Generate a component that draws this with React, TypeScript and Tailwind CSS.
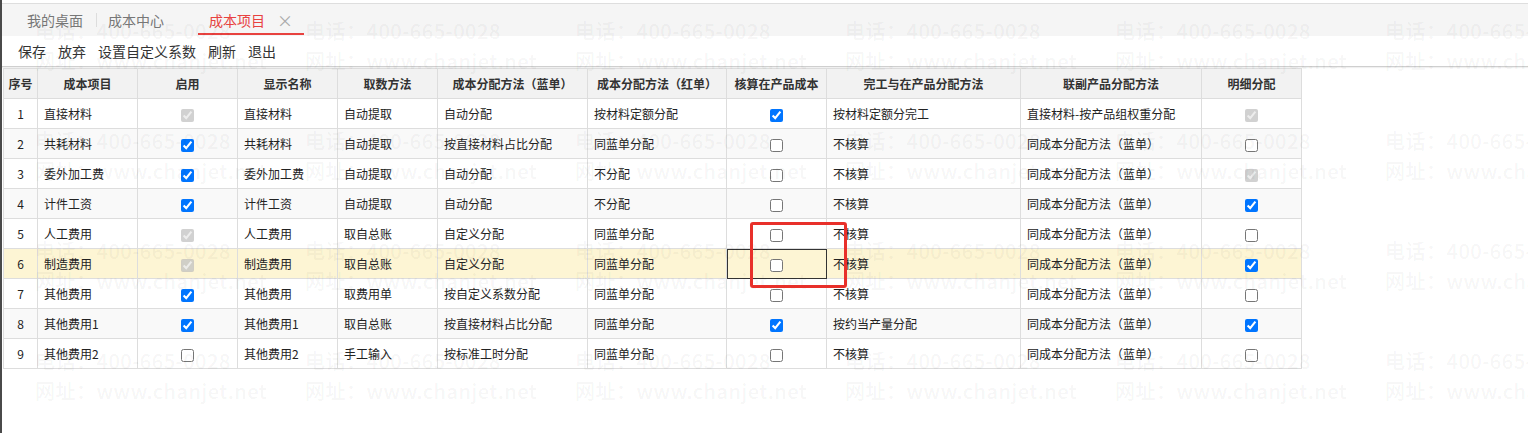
import React from 'react';

type Box = 'on' | 'off' | 'dis';

interface CostRow {
  no: number;
  item: string;
  enable: Box;
  name: string;
  fetch: string;
  blue: string;
  red: string;
  calc: Box;
  wip: string;
  joint: string;
  detail: Box;
}

const same = '同成本分配方法（蓝单）';

const rows: CostRow[] = [
  { no: 1, item: '直接材料', enable: 'dis', name: '直接材料', fetch: '自动提取', blue: '自动分配', red: '按材料定额分配', calc: 'on', wip: '按材料定额分完工', joint: '直接材料-按产品组权重分配', detail: 'dis' },
  { no: 2, item: '共耗材料', enable: 'on', name: '共耗材料', fetch: '自动提取', blue: '按直接材料占比分配', red: '同蓝单分配', calc: 'off', wip: '不核算', joint: same, detail: 'off' },
  { no: 3, item: '委外加工费', enable: 'on', name: '委外加工费', fetch: '自动提取', blue: '自动分配', red: '不分配', calc: 'off', wip: '不核算', joint: same, detail: 'dis' },
  { no: 4, item: '计件工资', enable: 'on', name: '计件工资', fetch: '自动提取', blue: '自动分配', red: '不分配', calc: 'off', wip: '不核算', joint: same, detail: 'on' },
  { no: 5, item: '人工费用', enable: 'dis', name: '人工费用', fetch: '取自总账', blue: '自定义分配', red: '同蓝单分配', calc: 'off', wip: '不核算', joint: same, detail: 'off' },
  { no: 6, item: '制造费用', enable: 'dis', name: '制造费用', fetch: '取自总账', blue: '自定义分配', red: '同蓝单分配', calc: 'off', wip: '不核算', joint: same, detail: 'on' },
  { no: 7, item: '其他费用', enable: 'on', name: '其他费用', fetch: '取费用单', blue: '按自定义系数分配', red: '同蓝单分配', calc: 'off', wip: '不核算', joint: same, detail: 'off' },
  { no: 8, item: '其他费用1', enable: 'on', name: '其他费用1', fetch: '取自总账', blue: '按直接材料占比分配', red: '同蓝单分配', calc: 'on', wip: '按约当产量分配', joint: same, detail: 'on' },
  { no: 9, item: '其他费用2', enable: 'off', name: '其他费用2', fetch: '手工输入', blue: '按标准工时分配', red: '同蓝单分配', calc: 'off', wip: '不核算', joint: same, detail: 'off' },
];

const headers = ['序号', '成本项目', '启用', '显示名称', '取数方法', '成本分配方法（蓝单）', '成本分配方法（红单）', '核算在产品成本', '完工与在产品分配方法', '联副产品分配方法', '明细分配'];

const Check = ({ state }: { state: Box }) => (
  <input
    type="checkbox"
    className="align-middle m-0"
    checked={state !== 'off'}
    disabled={state === 'dis'}
    readOnly
  />
);

const cell = 'border border-[#dddddd] px-[6px] whitespace-nowrap overflow-hidden';
const boxCell = 'border border-[#dddddd] text-center';

// repeated phone / site watermark laid over the whole page
const Watermark = () => {
  const tiles = Array.from({ length: 24 });
  return (
    <div className="pointer-events-none absolute inset-0 overflow-hidden">
      <div className="grid grid-cols-[repeat(6,270px)] auto-rows-[110px] pl-[33px] pt-[16px] text-[20px] leading-[30px] font-medium tracking-[0.5px] text-[rgba(0,0,0,0.05)]">
        {tiles.map((_, i) => (
          <div key={i} className="whitespace-nowrap">
            <div>电话：400-665-0028</div>
            <div>网址：www.chanjet.net</div>
          </div>
        ))}
      </div>
    </div>
  );
};

export default function App() {
  return (
    <div className="relative min-h-[433px] w-full overflow-hidden bg-white border-l-2 border-[#4a4a4a] font-['Noto_Sans_CJK_SC','Noto_Sans',sans-serif]">
      {/* tab bar */}
      <div className="mt-[3px] h-[33px] border-t border-[#dedede] bg-[#f5f5f5] flex items-stretch text-[14px] text-[#777]">
        <div className="pl-[25px] pr-[13px] flex items-center border-r border-[#dddddd] my-[9px]">我的桌面</div>
        <div className="pl-[11px] pr-[34px] flex items-center">成本中心</div>
        <div className="relative pl-[11px] pr-[11px] flex items-center gap-[12px] text-[#e8423f]">
          <span>成本项目</span>
          <span className="text-[#aaa] text-[16px] leading-none">×</span>
          <div className="absolute left-0 right-0 bottom-[1px] h-[2px] bg-[#e8423f]" />
        </div>
      </div>

      {/* toolbar */}
      <div className="h-[31px] border-b border-[#cfcfcf] shadow-[0_1px_1px_rgba(0,0,0,0.06)] flex items-center gap-3 pl-[16px] text-[14px] text-[#333]">
        <span>保存</span>
        <span>放弃</span>
        <span>设置自定义系数</span>
        <span>刷新</span>
        <span>退出</span>
      </div>

      {/* grid */}
      <div className="ml-px mt-px">
        <table className="table-fixed border-collapse w-[1299px] text-[12px] text-[#222]">
          <colgroup>
            <col className="w-[34px]" />
            <col className="w-[100px]" />
            <col className="w-[100px]" />
            <col className="w-[100px]" />
            <col className="w-[100px]" />
            <col className="w-[150px]" />
            <col className="w-[139px]" />
            <col className="w-[100px]" />
            <col className="w-[194px]" />
            <col className="w-[181px]" />
            <col className="w-[100px]" />
          </colgroup>
          <thead>
            <tr className="h-[30px] bg-[#f2f2f2]">
              {headers.map((h) => (
                <th key={h} className="border border-[#dddddd] font-semibold text-center text-[#333] whitespace-nowrap">{h}</th>
              ))}
            </tr>
          </thead>
          <tbody>
            {rows.map((r) => {
              const bg = r.no === 6 ? 'bg-[#fdf5d4]' : r.no % 2 === 0 ? 'bg-[#f9f9f9]' : 'bg-white';
              return (
                <tr key={r.no} className={`h-[30px] ${bg}`}>
                  <td className="border border-[#dddddd] text-center">{r.no}</td>
                  <td className={cell}>{r.item}</td>
                  <td className={boxCell}><Check state={r.enable} /></td>
                  <td className={cell}>{r.name}</td>
                  <td className={cell}>{r.fetch}</td>
                  <td className={cell}>{r.blue}</td>
                  <td className={cell}>{r.red}</td>
                  <td className={r.no === 6 ? `${boxCell} outline outline-1 -outline-offset-1 outline-[#333]` : boxCell}>
                    <Check state={r.calc} />
                  </td>
                  <td className={cell}>{r.wip}</td>
                  <td className={cell}>{r.joint}</td>
                  <td className={boxCell}><Check state={r.detail} /></td>
                </tr>
              );
            })}
          </tbody>
        </table>
      </div>

      <Watermark />

      {/* annotation */}
      <div className="pointer-events-none absolute left-[748px] top-[222px] w-[97px] h-[66px] border-[3px] border-[#e8302a] rounded-[3px]" />
    </div>
  );
}
